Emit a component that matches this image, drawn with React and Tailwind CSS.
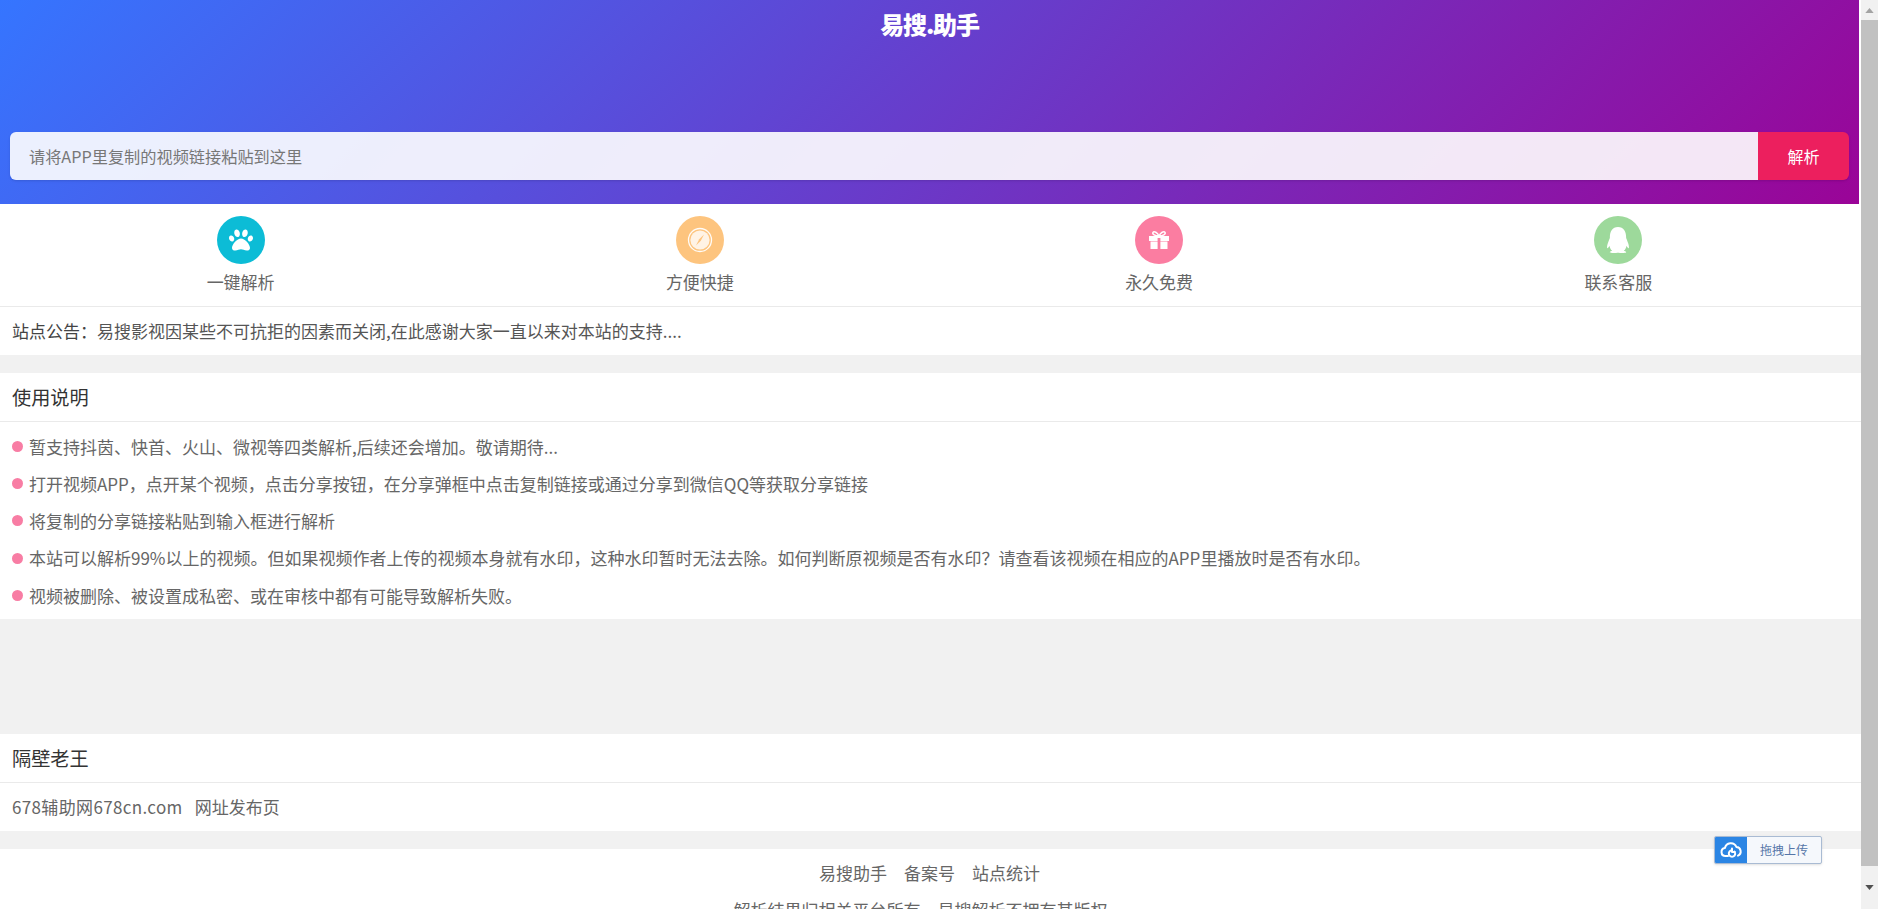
import React from "react";
import { FaPaw, FaQq } from "react-icons/fa";

const font = "font-['Noto_Sans_CJK_SC','Noto_Sans',sans-serif]";

function Compass() {
  return (
    <svg viewBox="0 0 32 32" className="w-[32px] h-[32px]">
      <circle cx="16" cy="16" r="11.5" fill="none" stroke="#fff" strokeWidth="1.3" opacity="0.95" />
      <circle cx="16" cy="16" r="9.6" fill="#fff" opacity="0.8" />
      <path d="M20 10.5 L16.8 16.8 L12 21.5 L15.2 15.2 Z" fill="#fdc47e" />
    </svg>
  );
}

function Gift() {
  return (
    <svg viewBox="0 0 24 24" className="w-[24px] h-[24px]">
      <path d="M2 8h20v5H2zM3.5 13.5h17V21h-17z" fill="#fff" />
      <rect x="10.6" y="10" width="2.8" height="11" fill="#fb7da1" />
      <path d="M12 8C10.4 4.4 7 2.8 6 4.4 5 6.2 8 8 12 8zm0 0c1.6-3.6 5-5.2 6-3.6 1 1.8-2 3.6-6 3.6z" fill="none" stroke="#fff" strokeWidth="1.5" />
    </svg>
  );
}

function Feature({ color, label, children }) {
  return (
    <div className="flex flex-col items-center">
      <div className={`w-[48px] h-[48px] rounded-full flex items-center justify-center ${color}`}>{children}</div>
      <div className="mt-[4px] text-[17px] leading-[28px] text-[#666]">{label}</div>
    </div>
  );
}

function Title({ children }) {
  return (
    <div className="h-[49px] pl-[12px] flex items-center border-b border-[#eaeaea] text-[19.2px] text-[#333]">{children}</div>
  );
}

const items = [
  "暂支持抖茵、快首、火山、微视等四类解析,后续还会增加。敬请期待...",
  "打开视频APP，点开某个视频，点击分享按钮，在分享弹框中点击复制链接或通过分享到微信QQ等获取分享链接",
  "将复制的分享链接粘贴到输入框进行解析",
  "本站可以解析99%以上的视频。但如果视频作者上传的视频本身就有水印，这种水印暂时无法去除。如何判断原视频是否有水印？请查看该视频在相应的APP里播放时是否有水印。",
  "视频被删除、被设置成私密、或在审核中都有可能导致解析失败。",
];

export default function App() {
  return (
    <div className={`relative flex h-[909px] w-full overflow-hidden bg-white ${font}`}>
      <main className="flex-1 min-w-0 bg-[#f1f1f1]">
        <div className="bg-white">
          <header className="h-[204px] mr-[2px] pt-[132px] px-[10px] bg-[linear-gradient(135deg,#3575ff,#9a0497)] relative">
            <div className="absolute top-[7px] left-0 right-0 text-center text-[24px] leading-[34px] font-black text-white tracking-[-1.2px]">易搜.助手</div>
            <div className="flex h-[48px] shadow-sm rounded-[6px]">
              <input
                readOnly
                placeholder="请将APP里复制的视频链接粘贴到这里"
                className="flex-1 min-w-0 h-full pl-[19px] rounded-l-[6px] bg-white/90 text-[16.2px] placeholder:text-[#777] outline-none"
              />
              <div className="w-[91px] flex items-center justify-center rounded-r-[6px] bg-[#ec1f5e] text-white text-[16px]">解析</div>
            </div>
          </header>

          <nav className="grid grid-cols-4 pl-[11px] pr-[13px] pt-[12px] h-[103px] border-b border-[#eaeaea]">
            <Feature color="bg-[#0cbcd6]" label="一键解析"><FaPaw className="text-white w-[24px] h-[24px]" /></Feature>
            <Feature color="bg-[#fdc47e]" label="方便快捷"><Compass /></Feature>
            <Feature color="bg-[#fb7da1]" label="永久免费"><Gift /></Feature>
            <Feature color="bg-[#9dd99b]" label="联系客服"><FaQq className="text-white w-[26px] h-[26px]" /></Feature>
          </nav>

          <div className="h-[48px] pl-[12px] flex items-center text-[17px] text-[#555]">
            <span className="text-[#444]">站点公告：</span>易搜影视因某些不可抗拒的因素而关闭,在此感谢大家一直以来对本站的支持....
          </div>
        </div>

        <section className="mt-[18px] bg-white">
          <Title>使用说明</Title>
          <ul className="pt-[6px] pb-[5px]">
            {items.map((t) => (
              <li key={t} className="h-[37.2px] pl-[12px] flex items-center text-[17px] text-[#666] whitespace-nowrap">
                <span className="shrink-0 w-[11px] h-[11px] rounded-full bg-[#f87da4] mr-[6px]" />
                {t}
              </li>
            ))}
          </ul>
        </section>

        <div className="mt-[115px] bg-white">
          <Title>隔壁老王</Title>
          <div className="h-[48px] pl-[12px] flex items-center gap-[12px] text-[17px] text-[#666]">
            <span className="tracking-[0.35px]">678辅助网678cn.com</span>
            <span>网址发布页</span>
          </div>
        </div>

        <footer className="mt-[18px] bg-white text-center text-[17px] text-[#666] pt-[5px] pb-[20px] pr-[2px]">
          <div className="flex justify-center gap-[17px] leading-[37px]">
            <span>易搜助手</span>
            <span>备案号</span>
            <span>站点统计</span>
          </div>
          <div className="leading-[37px] pr-[18px]">解析结果归相关平台所有，易搜解析不拥有其版权</div>
        </footer>
      </main>

      <aside className="w-[17px] shrink-0 flex flex-col bg-[#f1f1f1]">
        <div className="h-[20px] flex items-center justify-center">
          <svg viewBox="0 0 10 6" className="w-[9px] h-[5px]"><path d="M5 0 L10 6 H0 Z" fill="#a3a3a3" /></svg>
        </div>
        <div className="h-[846px] bg-[#c1c1c1]" />
        <div className="flex-1 flex items-center justify-center">
          <svg viewBox="0 0 10 6" className="w-[9px] h-[5px]"><path d="M0 0 H10 L5 6 Z" fill="#505050" /></svg>
        </div>
      </aside>

      <div className="absolute left-[1714px] top-[836px] w-[108px] h-[28px] flex rounded-[2px] overflow-hidden border border-[#a9bbd3] shadow-sm bg-[#f5f8fc]">
        <div className="w-[33px] -ml-px -my-px h-[28px] bg-[#2b85e4] flex items-center justify-center">
          <svg viewBox="0 0 24 24" className="w-[24px] h-[24px]" fill="none" stroke="#fff" strokeWidth="2" strokeLinecap="round" strokeLinejoin="round">
            <path d="M9 18H6.5a4 4 0 0 1-.6-7.95A6 6 0 0 1 17.4 9a4.5 4.5 0 0 1 1.6 8.6" />
            <path d="M15.5 13.5a3.2 3.2 0 1 1-2.6-1.2M13 10.6v3.4h3" />
          </svg>
        </div>
        <div className="flex-1 flex items-center justify-center text-[12px] text-[#5576a8]">拖拽上传</div>
      </div>
    </div>
  );
}
